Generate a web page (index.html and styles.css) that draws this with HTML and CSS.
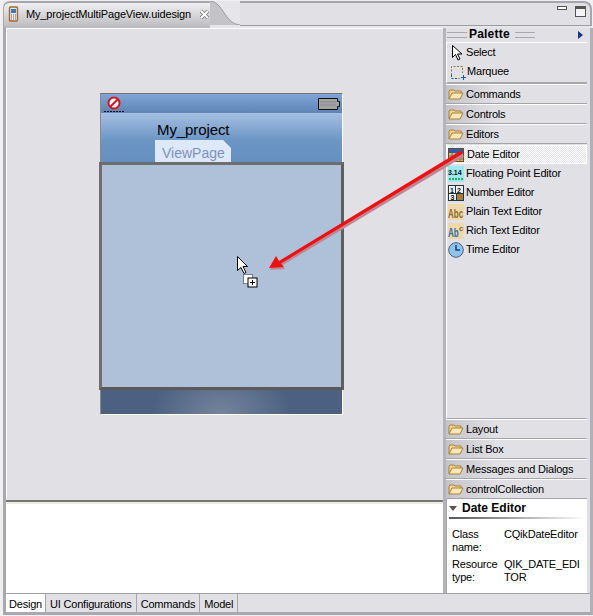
FILE: index.html
```html
<!DOCTYPE html>
<html lang="en">
<head>
<meta charset="utf-8">
<title>My_projectMultiPageView.uidesign</title>
<link rel="stylesheet" href="styles.css">
</head>
<body>
<svg class="defs" width="0" height="0">
  <defs>
    <symbol id="folder" viewBox="0 0 16 16">
      <path d="M1 13V5l1-1h4l1 1h6v2" fill="#f3d58f" stroke="#a9803c"/>
      <path d="M1 13l3-6h11l-3 6z" fill="#fbe7b4" stroke="#a9803c"/>
    </symbol>
  </defs>
</svg>
<div class="app">
  <header class="tabbar">
    <div class="filetab">
      <svg class="ico16" viewBox="0 0 16 16"><rect x="3.500" y="1" width="8" height="14" rx="1" fill="#e8e8e8" stroke="#a8672a" stroke-width="1.400"/><rect x="5" y="3" width="5" height="4" fill="#2f7fc0"/><path d="M5 9h5M5 11h5M5 13h5" stroke="#666" stroke-dasharray="1 1"/></svg>
      <span class="filename">My_projectMultiPageView.uidesign</span>
      <svg class="closex" viewBox="0 0 11 11"><path d="M2 2l7 7M9 2l-7 7" stroke="#777" stroke-width="3.600"/><path d="M2 2l7 7M9 2l-7 7" stroke="#fff" stroke-width="2"/></svg>
    </div>
    <svg class="tabcurve" viewBox="0 0 30 24" preserveAspectRatio="none"><path d="M0 0C14 1 14 23 30 24H0z" fill="#c4c4c8"/><path d="M0 0C14 1 14 23 30 24" fill="none" stroke="#9c9ca2"/></svg>
    <div class="tabfill">
      <span class="minbtn"></span>
      <span class="maxbtn"></span>
    </div>
  </header>

  <div class="pane">
    <div class="content">
      <main class="main">
        <section class="canvas">
          <div class="phone">
            <div class="statusbar">
              <svg class="noentry" viewBox="0 0 22 18"><circle cx="11" cy="8" r="5.500" fill="#fff" stroke="#d8121c" stroke-width="2"/><path d="M7 12l8-8" stroke="#d8121c" stroke-width="2"/><path d="M1 16.500h20" stroke="#111" stroke-dasharray="2 1"/></svg>
              <svg class="battery" viewBox="0 0 24 12"><path d="M1.500.5h19v3h2v5h-2v3h-19z" fill="#a3a3a3" stroke="#111"/><path d="M3 4h16M3 7h16" stroke="#8a8a8a"/></svg>
            </div>
            <div class="titlearea">
              <div class="apptitle">My_project</div>
              <div class="viewtab">ViewPage</div>
            </div>
            <div class="viewbody"></div>
            <div class="softkeys"></div>
          </div>
        </section>
        <div class="hsash"></div>
        <section class="props"></section>
      </main>

      <aside class="palette">
        <div class="pal-title">
          <span class="grip"></span>
          <span class="pal-name">Palette</span>
          <span class="grip"></span>
          <span class="pal-arrow"></span>
        </div>
        <div class="tools">
          <div class="row tool">
            <svg class="ico16" viewBox="0 0 16 16"><path d="M2.500 0.500v12l3-3 2.500 5.500 2-1-2.500-5h4.500z" fill="#fff" stroke="#000"/></svg>
            <span>Select</span>
          </div>
          <div class="row tool">
            <svg class="ico16" viewBox="0 0 16 16"><path d="M1.500 11V2.500h11V9" fill="none" stroke="#8a7a3c" stroke-dasharray="2 1.500"/><path d="M1.500 11v3.500h8" fill="none" stroke="#1f56a8" stroke-dasharray="2 1.500"/><path d="M11 13.500h5M13.500 11v5" stroke="#1f56a8"/></svg>
            <span class="marquee">Marquee</span>
          </div>
        </div>
        <div class="drawer"><svg class="ico16"><use href="#folder"/></svg><span>Commands</span></div>
        <div class="drawer"><svg class="ico16"><use href="#folder"/></svg><span>Controls</span></div>
        <div class="drawer"><svg class="ico16"><use href="#folder"/></svg><span>Editors</span></div>
        <div class="items">
          <div class="row item selected">
            <svg class="ico16" viewBox="0 0 16 16"><rect x=".5" y="1.500" width="15" height="13" fill="#d9b878" stroke="#6b4a20"/><rect x="1" y="2" width="14" height="4" fill="#2a5fb0"/><path d="M4 6v8M8 6v8M12 6v8M1 9h14M1 12h14" stroke="#8a6a34"/></svg>
            <span>Date Editor</span>
          </div>
          <div class="row item">
            <svg class="ico16" viewBox="0 0 16 16"><rect width="16" height="16" fill="#9be8ef"/><text x="0" y="9" class="ico-num">3.14</text><path d="M1 13h14" stroke="#0c9c2c" stroke-width="1.500" stroke-dasharray="2 1"/></svg>
            <span>Floating Point Editor</span>
          </div>
          <div class="row item">
            <svg class="ico16" viewBox="0 0 16 16"><rect width="16" height="16" fill="#25333a"/><rect x="1" y="1" width="6" height="7" fill="#e9f3f5"/><rect x="8" y="1" width="7" height="7" fill="#e9f3f5"/><rect x="1" y="9" width="7" height="6" fill="#e9f3f5"/><rect x="9" y="9" width="6" height="6" fill="#a87c3c"/><text x="2" y="7.500" class="ico-num">1</text><text x="9" y="7.500" class="ico-num">2</text><text x="2.500" y="14.500" class="ico-num">3</text></svg>
            <span>Number Editor</span>
          </div>
          <div class="row item">
            <svg class="ico16" viewBox="0 0 16 16"><rect width="16" height="16" fill="#f0d9a8"/><text x="0" y="11.500" transform="scale(.8 1.2)" class="ico-abc">Abc</text></svg>
            <span>Plain Text Editor</span>
          </div>
          <div class="row item">
            <svg class="ico16" viewBox="0 0 16 16"><rect width="16" height="16" fill="#f0d9a8"/><text x="0" y="11.500" transform="scale(.8 1.2)" class="ico-abc blue">Ab</text><text x="11" y="8" class="ico-c">c</text></svg>
            <span>Rich Text Editor</span>
          </div>
          <div class="row item">
            <svg class="ico16" viewBox="0 0 16 16"><circle cx="8" cy="8" r="7.300" fill="#8ec4ea" stroke="#4d5f78"/><path d="M8 3v5h4" fill="none" stroke="#12408a" stroke-width="1.500"/></svg>
            <span>Time Editor</span>
          </div>
        </div>
        <div class="drawer"><svg class="ico16"><use href="#folder"/></svg><span>Layout</span></div>
        <div class="drawer"><svg class="ico16"><use href="#folder"/></svg><span>List Box</span></div>
        <div class="drawer"><svg class="ico16"><use href="#folder"/></svg><span>Messages and Dialogs</span></div>
        <div class="drawer"><svg class="ico16"><use href="#folder"/></svg><span>controlCollection</span></div>
        <div class="details">
          <div class="det-head"><span class="tri"></span><b>Date Editor</b></div>
          <div class="det-rule"></div>
          <div class="det-grid">
            <span>Class<br>name:</span><span>CQikDateEditor</span>
            <span>Resource<br>type:</span><span>QIK_DATE_EDI<br>TOR</span>
          </div>
        </div>
      </aside>
    </div>
    <nav class="pagetabs">
      <span class="ptab active">Design</span>
      <span class="ptab">UI Configurations</span>
      <span class="ptab">Commands</span>
      <span class="ptab">Model</span>
    </nav>
  </div>
</div>

<svg class="overlay" viewBox="0 0 593 616" width="593" height="616">
  <path d="M461 151.500L279 261l-3-5-7 12 15-1-3-3.500L463 154.500z" fill="#b98a96" transform="translate(1 2)"/>
  <path d="M461 150.500L279 261l-3-5-7 12 15-1-3-3.500L463 153.500z" fill="#f01010"/>
  <path d="M237.500 256.500v14l3.500-3 3 6 2-1-3-6h4.500z" fill="#fff" stroke="#000"/>
  <rect x="243.500" y="274.500" width="9" height="9" fill="#fff" stroke="#222" stroke-dasharray="1 1"/>
  <rect x="248" y="278" width="9" height="9" fill="#fff" stroke="#000"/>
  <path d="M250 282.500h5M252.500 280v5" stroke="#000"/>
</svg>
</body>
</html>
```
FILE: styles.css
```css
* { box-sizing: border-box; }
html, body { margin: 0; height: 100%; }
body {
  width: 593px;
  height: 616px;
  overflow: hidden;
  position: relative;
  background: #f0f0f3;
  font: 11px/13px "Liberation Sans", sans-serif;
  letter-spacing: -.2px;
  color: #000;
}
.defs { position: absolute; }
.app { display: flex; flex-direction: column; height: 616px; }
.ico16 { width: 16px; height: 16px; flex: none; display: block; }

/* top tab bar */
.tabbar {
  display: flex;
  height: 28px;
  flex: none;
  margin: 1px 1px -1px 3px;
  border-top-right-radius: 8px;
  background: #e6e6ea;
}
.filetab {
  display: flex;
  align-items: center;
  width: 207px;
  height: 28px;
  padding: 0 0 4px 2px;
  gap: 4px;
  border-top-left-radius: 7px;
  border-top: 2px solid #a6a6ac;
  border-left: 1px solid #a6a6ac;
  background: linear-gradient(#f0f0f2, #b8b8bc);
}
.filename { letter-spacing: -.15px; width: 170px; white-space: nowrap; }
.closex { width: 11px; height: 11px; flex: none; }
.tabcurve { width: 30px; height: 24px; flex: none; display: block; }
.tabfill {
  flex: 1;
  height: 25px;
  position: relative;
  border-top: 2px solid #a6a6ac;
  border-right: 2px solid #a6a6ac;
  border-bottom: 1px solid #9c9ca2;
  border-top-right-radius: 8px;
  background: #e0e0e5;
}
.minbtn {
  position: absolute;
  right: 23px;
  top: 3px;
  width: 10px;
  height: 4px;
  background: #fff;
  border: 1px solid #555;
}
.maxbtn {
  position: absolute;
  right: 4px;
  top: 3px;
  width: 11px;
  height: 11px;
  border: 1px solid #555;
  border-top-width: 3px;
  background: #f4f4f6;
}

/* main pane */
.pane {
  flex: 1;
  display: flex;
  flex-direction: column;
  margin: 0 0 1px 3px;
  border-left: 3px solid #a8a8ae;
  border-right: 3px solid #b0b0b6;
  border-bottom: 3px solid #a8a8ae;
  background: #e0e0e5;
  min-height: 0;
}
.content { flex: 1; display: flex; min-height: 0; border-bottom: 1px solid #a0a0a6; }
.main { width: 437px; flex: none; display: flex; flex-direction: column; background: #fff; }
.canvas {
  height: 472px;
  flex: none;
  padding: 64px 0 0 93px;
  background: #e0e0e5;
  border-top: 1px solid #fff;
  border-left: 1px solid #fff;
}
.hsash { height: 4px; flex: none; background: linear-gradient(#77777a 0 2px, #ececdf 2px); }
.props { flex: 1; background: #fff; }

/* phone */
.phone {
  width: 243px;
  border-top: 1px solid #77736a;
  border-left: 1px solid #8a8a8a;
  border-right: 1px solid #fff;
  border-bottom: 1px solid #fff;
  display: flex;
  flex-direction: column;
  background: #5f87b8;
}
.statusbar {
  height: 19px;
  display: flex;
  justify-content: space-between;
  align-items: center;
  padding: 0 1px 0 2px;
  background: linear-gradient(#7fa6d6, #5d84b4);
}
.noentry { width: 22px; height: 18px; display: block; }
.battery { width: 24px; height: 12px; display: block; }
.titlearea {
  height: 50px;
  padding: 8px 0 0 54px;
  background: linear-gradient(#a6bfe2, #6b96c4 55%, #6490bf);
}
.apptitle { font: 15px/17px "Liberation Sans", sans-serif; padding-left: 2px; letter-spacing: -.1px; }
.viewtab {
  width: 76px;
  height: 24px;
  margin-top: 2px;
  padding: 4px 0 0 7px;
  font: 14px/19px "Liberation Sans", sans-serif;
  letter-spacing: 0;
  color: #7f93ba;
  background: #dde8fb;
  clip-path: polygon(0 0, 68px 0, 76px 8px, 76px 100%, 0 100%);
}
.viewbody {
  height: 228px;
  margin: -1px -2px 0 -2px;
  position: relative;
  background: #afc1d8;
  border: 3px solid #6e6e6e;
  border-bottom-color: #5a5a5a;
  border-right-color: #5f5f5f;
}
.softkeys {
  height: 24px;
  background: radial-gradient(ellipse 70px 50px at 50% 100%, #74849c, #4c6182 100%);
}

/* palette */
.palette {
  flex: 1;
  display: flex;
  flex-direction: column;
  padding-right: 3px;
  background: #e0e0e5;
  border-left: 3px solid #b4b4ba;
  min-width: 0;
}
.pal-title {
  height: 14px;
  flex: none;
  display: flex;
  align-items: center;
  position: relative;
  padding: 0 0 1px 1px;
}
.pal-name { font: bold 12px/13px "Liberation Sans", sans-serif; letter-spacing: .2px; margin: 0 5px 0 2px; }
.grip {
  width: 20px;
  height: 6px;
  border-top: 1px solid #a8a8ae;
  border-bottom: 1px solid #a8a8ae;
}
.pal-arrow {
  position: absolute;
  right: 4px;
  top: 3px;
  border-left: 5px solid #123a78;
  border-top: 4px solid transparent;
  border-bottom: 4px solid transparent;
}
.row { display: flex; align-items: center; gap: 2px; }
.tools {
  height: 42px;
  padding: 0 0 0 3px;
  flex: none;
  border-top: 1px solid #fff;
  border-left: 1px solid #fff;
  border-bottom: 2px solid #a8a8ae;
}
.tool { height: 19px; gap: 0; }
.marquee { margin-left: 1px; }
.drawer {
  height: 20px;
  flex: none;
  display: flex;
  align-items: center;
  gap: 2px;
  padding-left: 2px;
  border-top: 1px solid #fff;
  border-bottom: 1px solid #a4a4aa;
  background: linear-gradient(90deg, #c4c4c8, #e0e0e5 35%);
}
.items {
  flex: 1;
  padding: 1px 0 0 0;
  min-height: 0;
  border-left: 1px solid #fff;
  border-bottom: 1px solid #a4a4aa;
}
.item { height: 19px; padding-left: 1px; }
.selected {
  border: 1px solid #fff;
  padding-left: 0;
  gap: 3px;
  background: repeating-conic-gradient(#e4e4e8 0 25%, #fff 0 50%) 0 0 / 2px 2px;
}
.ico-num { font: bold 7px "Liberation Sans", sans-serif; letter-spacing: 0; fill: #111; }
.ico-abc { font: bold 10px "Liberation Sans", sans-serif; letter-spacing: 0; fill: #8a6a2c; }
.ico-abc.blue { fill: #2c6aa8; }
.ico-c { font: bold 8px "Liberation Sans", sans-serif; letter-spacing: 0; fill: #8a6a2c; }
.details {
  height: 94px;
  flex: none;
  background: #fff;
  padding: 1px 0 0 2px;
  border-left: 1px solid #a8a8ae;
}
.det-head { display: flex; align-items: center; gap: 5px; height: 16px; }
.det-head b { font: bold 12px/13px "Liberation Sans", sans-serif; letter-spacing: 0; }
.tri {
  border-top: 5px solid #555;
  border-left: 4px solid transparent;
  border-right: 4px solid transparent;
}
.det-rule { height: 2px; margin-top: 1px; background: linear-gradient(90deg, #55555a, #fff); }
.det-grid {
  display: grid;
  grid-template-columns: 52px 1fr;
  row-gap: 4px;
  padding: 9px 0 0 3px;
}

/* bottom tabs */
.pagetabs { height: 18px; flex: none; display: flex; background: #e0e0e5; }
.ptab {
  padding: 4px 4px 0 4px;
  height: 18px;
  border-right: 1px solid #a4a4aa;
  white-space: nowrap;
}
.active { padding: 4px 3px 0 3px; background: #fff; }

.overlay { position: absolute; left: 0; top: 0; pointer-events: none; }
```
